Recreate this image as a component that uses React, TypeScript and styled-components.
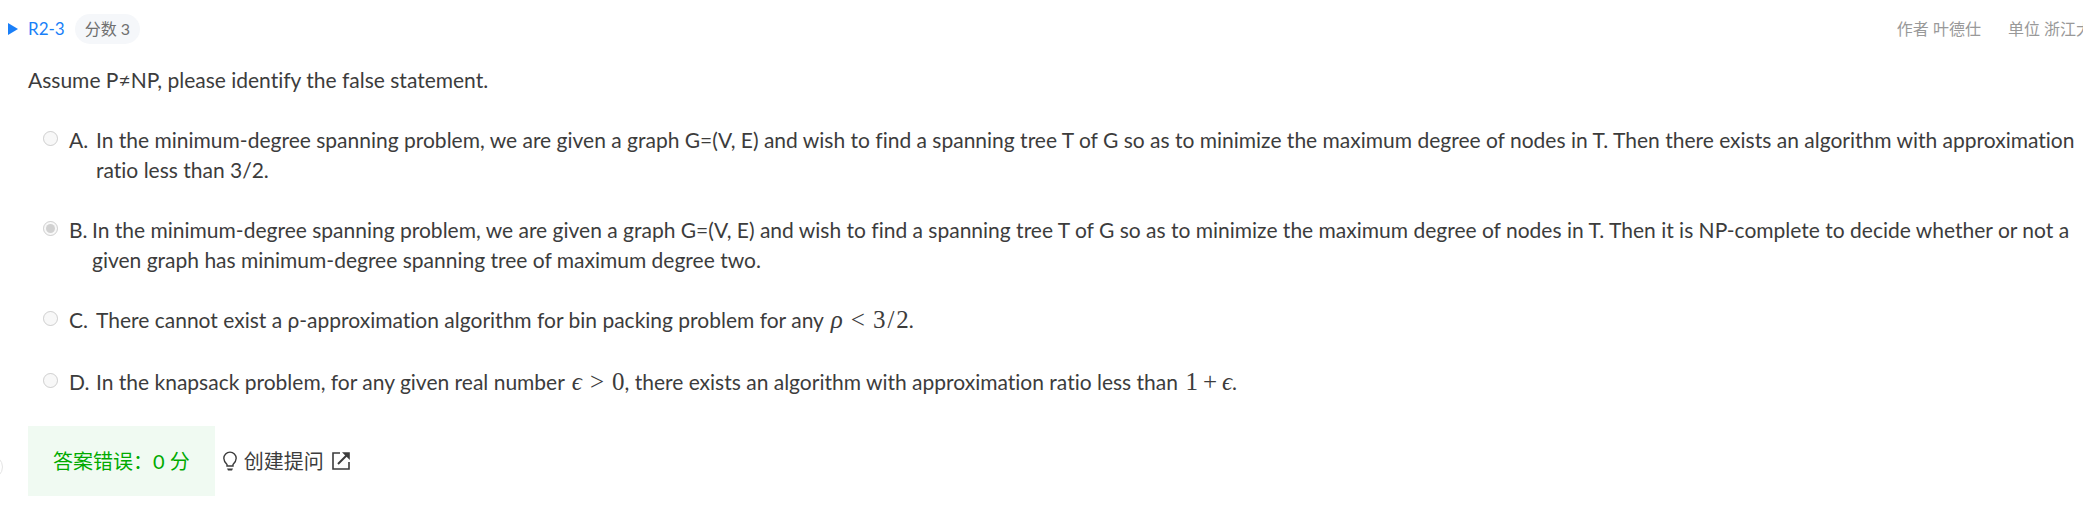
import React from "react";
import styled, { createGlobalStyle } from "styled-components";

const Global = createGlobalStyle`
  * { box-sizing: border-box; }
  body {
    margin: 0;
    background: #fff;
    color: #3c3c3c;
    font-family: Lato, "Noto Sans CJK SC", sans-serif;
    font-size: 21px;
    line-height: 30px;
    font-variant-ligatures: none;
  }
`;

const Page = styled.main`
  position: relative;
  overflow: hidden;
  padding: 14px 0 14px 8px;
`;

const Header = styled.header`
  display: flex;
  align-items: center;
  font-size: 16px;
`;

const Marker = styled.svg`
  width: 10px;
  height: 12px;
  margin-right: 10px;
  fill: #1a7ff8;
`;

const ProblemLink = styled.a`
  color: #1a7ff8;
  font-size: 17px;
  text-decoration: none;
`;

const Score = styled.span`
  margin-left: 10px;
  padding: 0 10px;
  border-radius: 15px;
  background: #f5f7fa;
  color: #707070;
`;

const Credits = styled.div`
  display: flex;
  gap: 27px;
  margin: 0 -9px 0 auto;
  color: #999;
  white-space: nowrap;
`;

const Body = styled.section`
  padding: 21px 0 0 20px;
`;

const Statement = styled.p`
  margin: 0 0 30px;
`;

const Options = styled.fieldset`
  display: flex;
  flex-direction: column;
  gap: 30px;
  margin: 0;
  padding: 0 0 0 15px;
  border: 0;
`;

const Option = styled.label`
  display: flex;
  align-items: flex-start;
  min-height: 32px;
`;

const Radio = styled.input`
  flex: none;
  width: 15px;
  height: 15px;
  margin: 6px 11px 0 0;
`;

const Letter = styled.span<{ $narrow?: boolean }>`
  flex: none;
  width: ${(p) => (p.$narrow ? 23 : 27)}px;
`;

const Formula = styled.span`
  margin-left: 2px;
  font-family: "Liberation Serif", serif;
  font-size: 25px;
  line-height: 1;
  white-space: nowrap;
`;

const Variable = styled.i`
  font-family: "Liberation Serif", "DejaVu Serif", serif;
`;

const Operator = styled.span<{ $gap: number }>`
  margin: 0 ${(p) => p.$gap}px;
`;

const Footer = styled.footer`
  display: flex;
  align-items: center;
  margin-top: 27px;
  font-size: 20px;
`;

const Result = styled.output`
  padding: 20px 25px;
  background: #f0faf2;
  color: #00aa00;
`;

const AskButton = styled.button`
  display: flex;
  align-items: center;
  gap: 7px;
  padding: 0 8px;
  border: 0;
  background: none;
  color: #3c3c3c;
  font: inherit;
`;

const Icon = styled.svg<{ $width: number }>`
  width: ${(p) => p.$width}px;
  height: 20px;
  fill: none;
  stroke: currentColor;
`;

const SideHandle = styled.span`
  position: absolute;
  left: -21px;
  bottom: 31px;
  width: 24px;
  height: 24px;
  border: 1px solid #e4e4e4;
  border-radius: 50%;
`;

const shared =
  "In the minimum-degree spanning problem, we are given a graph G=(V, E) and wish to find a spanning tree T of G so as to minimize the maximum degree of nodes in T. Then ";

const options = [
  { id: "A", text: <>{shared}there exists an algorithm with approximation ratio less than 3/2.</> },
  {
    id: "B",
    text: <>{shared}it is NP-complete to decide whether or not a given graph has minimum-degree spanning tree of maximum degree two.</>,
  },
  {
    id: "C",
    text: (
      <>
        There cannot exist a ρ-approximation algorithm for bin packing problem for any{" "}
        <Formula><Variable>ρ</Variable><Operator $gap={8}>&lt;</Operator>3<Operator $gap={2}>/</Operator>2</Formula>.
      </>
    ),
  },
  {
    id: "D",
    text: (
      <>
        In the knapsack problem, for any given real number{" "}
        <Formula><Variable>ϵ</Variable><Operator $gap={8}>&gt;</Operator>0</Formula>, there exists an algorithm
        with approximation ratio less than{" "}
        <Formula>1<Operator $gap={5}>+</Operator><Variable>ϵ</Variable></Formula>.
      </>
    ),
  },
];

export default function App() {
  return (
    <>
      <Global />
      <Page>
        <Header>
          <Marker viewBox="0 0 10 12" aria-hidden="true"><path d="M0 0L10 6L0 12Z" /></Marker>
          <ProblemLink href="#r2-3">R2-3</ProblemLink>
          <Score>分数 3</Score>
          <Credits>
            <span>作者 叶德仕</span>
            <span>单位 浙江大</span>
          </Credits>
        </Header>
        <Body id="r2-3">
          <Statement>Assume P≠NP, please identify the false statement.</Statement>
          <Options>
            {options.map(({ id, text }) => (
              <Option key={id}>
                <Radio type="radio" name="answer" value={id} defaultChecked={id === "B"} disabled />
                <Letter $narrow={id === "B"}>{id}.</Letter>
                <span>{text}</span>
              </Option>
            ))}
          </Options>
          <Footer>
            <Result>答案错误：0 分</Result>
            <AskButton type="button">
              <Icon $width={14} viewBox="0 0 14 20" aria-hidden="true">
                <path d="M4 15V13.500C2 11.500 0.800 10 0.800 7.300A6.200 6.200 0 0 1 13.200 7.300C13.200 10 12 11.500 10 13.500V15Z" strokeWidth="1.400" />
                <path d="M4 17.500H10L9 19.500H5Z" fill="currentColor" stroke="none" />
              </Icon>
              创建提问
              <Icon $width={20} viewBox="0 0 20 20" aria-hidden="true">
                <path d="M9 2H2V18H18V11" strokeWidth="1.600" />
                <path d="M7 13L16 4" strokeWidth="2" />
                <path d="M11 1.200H18.800V9Z" fill="currentColor" stroke="none" />
              </Icon>
            </AskButton>
          </Footer>
        </Body>
        <SideHandle />
      </Page>
    </>
  );
}
